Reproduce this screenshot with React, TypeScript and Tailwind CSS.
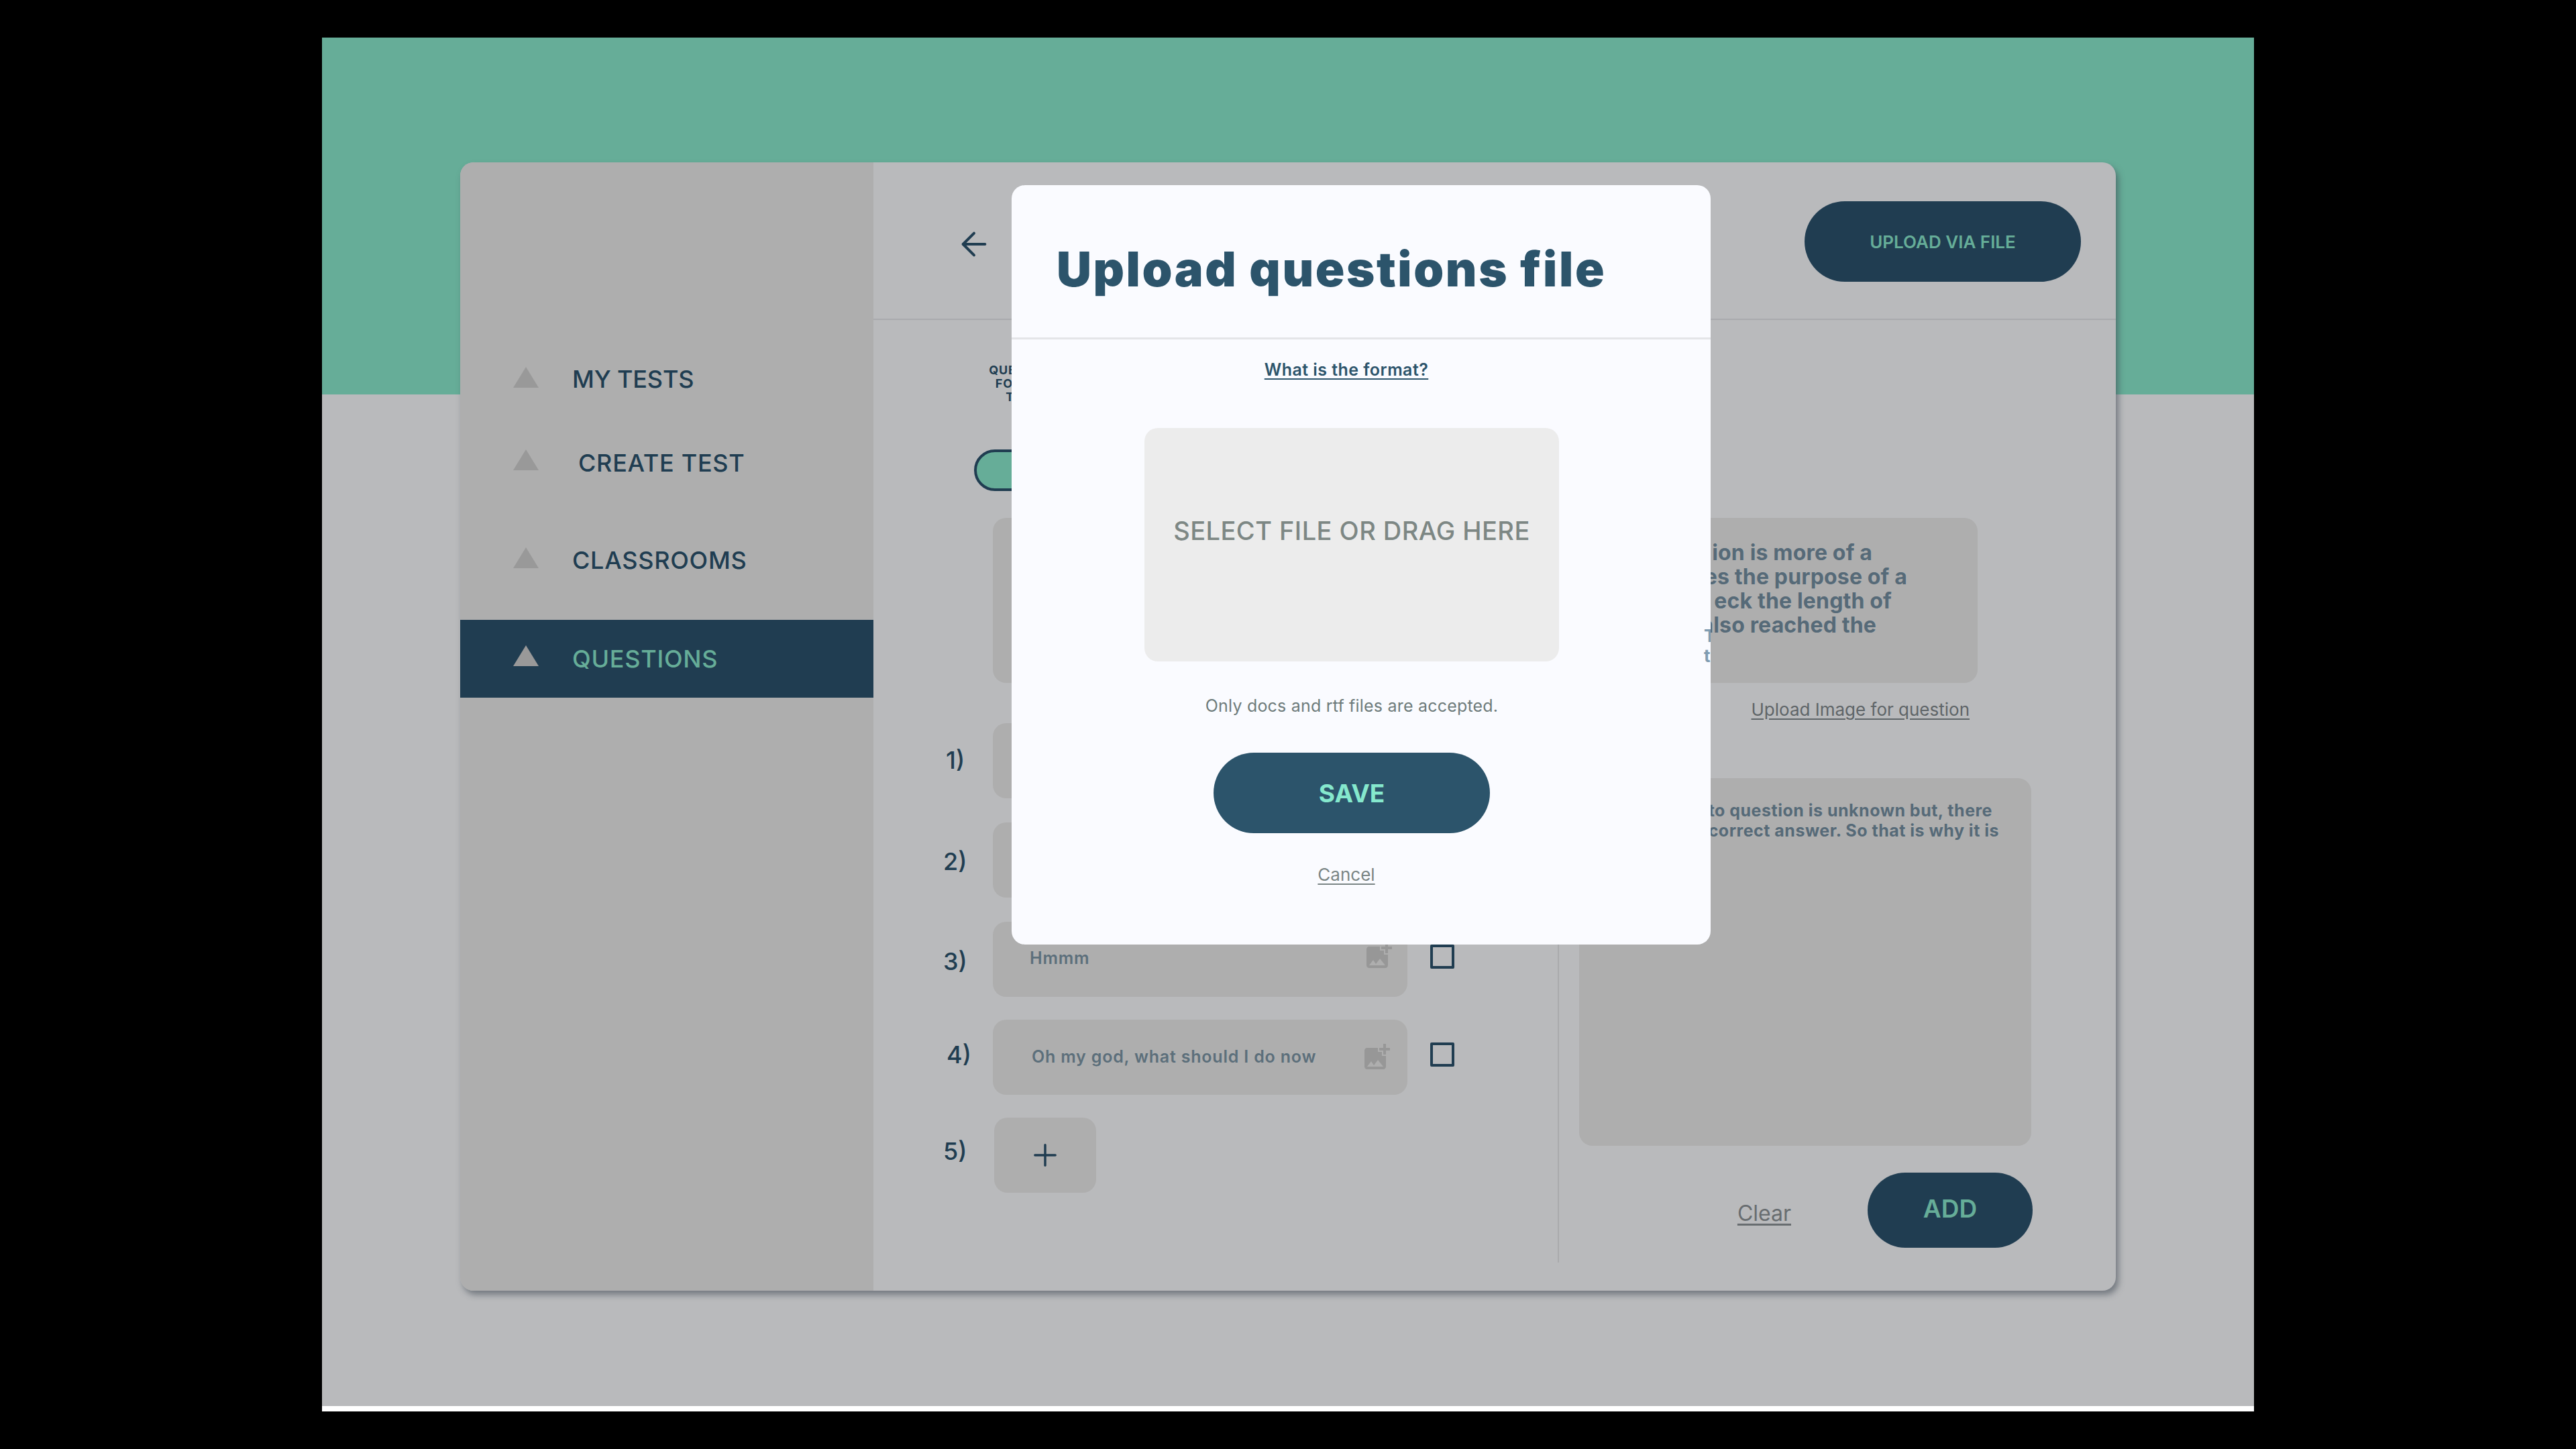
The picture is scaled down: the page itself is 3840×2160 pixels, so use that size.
import { ArrowLeft, Plus } from 'lucide-react';
import { MdAddPhotoAlternate } from 'react-icons/md';

const NAV_ITEMS = [
  { label: 'MY TESTS', rowClass: 'mt-[265px]', gapClass: 'ml-[50px] tracking-[-0.005em]', triangleClass: 'mb-[6px]' },
  { label: 'CREATE TEST', rowClass: 'mt-[9px]', gapClass: 'ml-[59px] tracking-[0.02em]', triangleClass: 'mb-[10px]' },
  { label: 'CLASSROOMS', rowClass: 'mt-[29px]', gapClass: 'ml-[50px] tracking-[0.02em]', triangleClass: 'mb-[8px]' },
  {
    label: 'QUESTIONS',
    rowClass: 'mt-[31px] bg-[#203d51]',
    gapClass: 'ml-[50px] tracking-[0.02em]',
    triangleClass: 'mb-[10px]',
    active: true,
  },
];

const QUESTION_LINES = [
  { text: 'ion is more of a', className: 'mr-[157px]' },
  { text: 'es the purpose of a', className: 'mr-[105px]' },
  { text: 'eck the length of', className: 'mr-[128px]' },
  { text: 'also reached the', className: 'mr-[151px]' },
];

const OPTIONS = [
  { label: '1)', text: '', rowClass: '', labelClass: 'pl-[4px] mb-[3px]', textClass: 'pl-[55px]', iconClass: 'mr-[22px]' },
  { label: '2)', text: '', rowClass: 'mt-[36px]', labelClass: 'mt-[4px]', textClass: 'pl-[55px]', iconClass: 'mr-[22px]' },
  { label: '3)', text: 'Hmmm', rowClass: 'mt-[36px]', labelClass: 'mt-[6px]', textClass: 'pl-[55px] mb-[2px]', iconClass: 'mr-[19px] mb-[10px]' },
  { label: '4)', text: 'Oh my god, what should I do now', rowClass: 'mt-[34px]', labelClass: 'pl-[5px] mb-[8px]', textClass: 'pl-[58px]', iconClass: 'mr-[22px]' },
];

function Triangle({ className }: { className: string }) {
  return (
    <svg width="38" height="31" viewBox="0 0 38 31" className={`shrink-0 ${className}`}>
      <polygon points="19,0 38,31 0,31" fill="#999999" />
    </svg>
  );
}

function Sidebar() {
  return (
    <aside className="flex w-[616px] shrink-0 flex-col bg-[#aeaeae]">
      {NAV_ITEMS.map((item) => (
        <div key={item.label} className={`flex h-[116px] items-center pl-[79px] ${item.rowClass}`}>
          <Triangle className={item.triangleClass} />
          <span
            className={`${item.gapClass} text-[36px] font-medium ${
              item.active ? 'text-[#66ad98]' : 'text-[#203d51]'
            }`}
          >
            {item.label}
          </span>
        </div>
      ))}
    </aside>
  );
}

function OptionRow({ option }: { option: (typeof OPTIONS)[number] }) {
  return (
    <div className={`flex items-center ${option.rowClass}`}>
      <div className={`w-[74px] shrink-0 text-[36px] font-medium text-[#203d51] ${option.labelClass}`}>
        {option.label}
      </div>
      <div className="flex h-[112px] w-[618px] shrink-0 items-center rounded-[20px] bg-[#aeaeae]">
        <span className={`flex-1 text-[25px] font-semibold tracking-[0.032em] text-[#5c6f7b] ${option.textClass}`}>
          {option.text}
        </span>
        <MdAddPhotoAlternate className={`h-[48px] w-[48px] text-[#979797] ${option.iconClass}`} />
      </div>
      <div className="mb-[8px] ml-[34px] h-[36px] w-[36px] rounded-[2px] border-4 border-[#203d51]" />
    </div>
  );
}

function MainPanel() {
  return (
    <main className="flex min-w-0 flex-1 flex-col">
      <header className="flex h-[235px] items-center justify-between border-b-2 border-[#a9aaad] pl-[122px] pr-[52px]">
        <ArrowLeft className="mt-[11px] h-[56px] w-[56px] text-[#203d51]" strokeWidth={1.7} />
        <button className="mt-[2px] h-[120px] w-[412px] rounded-full bg-[#203d51] pt-[2px] text-[26px] font-semibold text-[#66ad98]">
          UPLOAD VIA FILE
        </button>
      </header>

      <div className="flex flex-col pl-[104px]">
        <div className="ml-[64px] mt-[65px] w-[110px] text-center text-[18px] font-bold leading-[20px] tracking-[0.05em] text-[#203d51]">
          QUESTION
          <br />
          FORMAT
          <br />
          TYPE
        </div>
        <div className="ml-[46px] mt-[68px] h-[62px] w-[300px] rounded-full border-4 border-[#203d51] bg-[#66ad98]" />

        <div className="ml-[74px] mt-[40px] flex h-[246px] w-[1468px] flex-col items-end rounded-[20px] bg-[#aeaeae] pt-[34px] text-[32px] font-bold leading-[36px] tracking-[0.005em] text-[#566a78]">
          {QUESTION_LINES.map((line) => (
            <div key={line.text} className={line.className}>
              {line.text}
            </div>
          ))}
        </div>
        <div className="ml-[74px] mt-[24px] h-[32px] w-[1468px] pr-[12px] text-right text-[26px] leading-[32px] text-[#5f6568] underline underline-offset-4">
          Upload Image for question
        </div>

        <div className="mt-[4px] flex h-[804px]">
          <div className="w-[918px] shrink-0 border-r-2 border-[#a9aaad]">
            {OPTIONS.map((option) => (
              <OptionRow key={option.label} option={option} />
            ))}
            <div className="mt-[34px] flex items-center">
              <div className="mb-[12px] w-[76px] shrink-0 text-[36px] font-medium text-[#203d51]">5)</div>
              <button className="flex h-[112px] w-[152px] items-center justify-center rounded-[20px] bg-[#aeaeae]">
                <Plus className="h-[52px] w-[52px] text-[#203d51]" strokeWidth={1.6} />
              </button>
            </div>
          </div>

          <div className="pl-[30px]">
            <div className="mt-[82px] flex h-[548px] w-[674px] flex-col items-end rounded-[20px] bg-[#aeaeae] pt-[33px] text-[25px] font-bold leading-[30px] tracking-[0.02em] text-[#566a78]">
              <div className="mr-[58px]">to question is unknown but, there</div>
              <div className="mr-[48px]">correct answer. So that is why it is</div>
            </div>
            <div className="mt-[40px] flex w-[676px] items-center justify-end gap-[114px]">
              <span className="mt-[10px] text-[32px] text-[#686d70] underline underline-offset-4">Clear</span>
              <button className="h-[112px] w-[246px] rounded-full bg-[#203d51] pb-[4px] text-[37px] font-semibold text-[#66ad98]">
                ADD
              </button>
            </div>
          </div>
        </div>
      </div>
    </main>
  );
}

function UploadModal() {
  return (
    <div className="absolute left-[1028px] top-[220px] h-[1132px] w-[1042px] overflow-hidden rounded-[20px] bg-[#fafbff]">
      <div className="flex h-[230px] items-center border-b-[3px] border-[#e4e5e8] pl-[67px]">
        <h1 className="pt-[22px] text-[72px] font-black tracking-[0.036em] text-[#2c546b]">Upload questions file</h1>
      </div>

      <div className="flex flex-col items-center pr-[28px]">
        <a className="mr-[16px] mt-[29px] text-[25px] font-semibold leading-[32px] tracking-[0.018em] text-[#2c546b] underline underline-offset-4">
          What is the format?
        </a>
        <div className="mt-[71px] flex h-[348px] w-[618px] justify-center rounded-[20px] bg-[#ececec] pt-[130px] text-[38px] font-medium leading-[46px] tracking-[0.012em] text-[#7d8784]">
          SELECT FILE OR DRAG HERE
        </div>
        <p className="mt-[50px] text-[25px] leading-[32px] tracking-[0.008em] text-[#6e7b7b]">
          Only docs and rtf files are accepted.
        </p>
        <button className="mt-[54px] h-[120px] w-[412px] rounded-full bg-[#2c546b] pt-[2px] text-[37px] font-bold text-[#85e8cd]">
          SAVE
        </button>
        <a className="mr-[16px] mt-[46px] text-[26px] leading-[32px] text-[#7a8585] underline underline-offset-4">
          Cancel
        </a>
      </div>

      {/* text running out of the modal on the right, cut off by its edge */}
      <div className="absolute left-[1032px] top-[657px] text-[26px] font-bold leading-[30px] text-[#7f9cb1]">
        T
        <br />t
      </div>
    </div>
  );
}

export default function App() {
  return (
    <div className="flex min-h-screen justify-center bg-black pt-[56px] font-[Inter,sans-serif]">
      <div className="relative h-[2048px] w-[2880px] border-b-8 border-white bg-[linear-gradient(#66ad98_532px,#b9babc_532px)] pl-[206px] pt-[186px]">
        <div className="flex h-[1682px] w-[2468px] overflow-hidden rounded-[20px] bg-[#b9babc] shadow-[4px_6px_10px_rgba(60,70,80,0.55)]">
          <Sidebar />
          <MainPanel />
        </div>
        <UploadModal />
      </div>
    </div>
  );
}
